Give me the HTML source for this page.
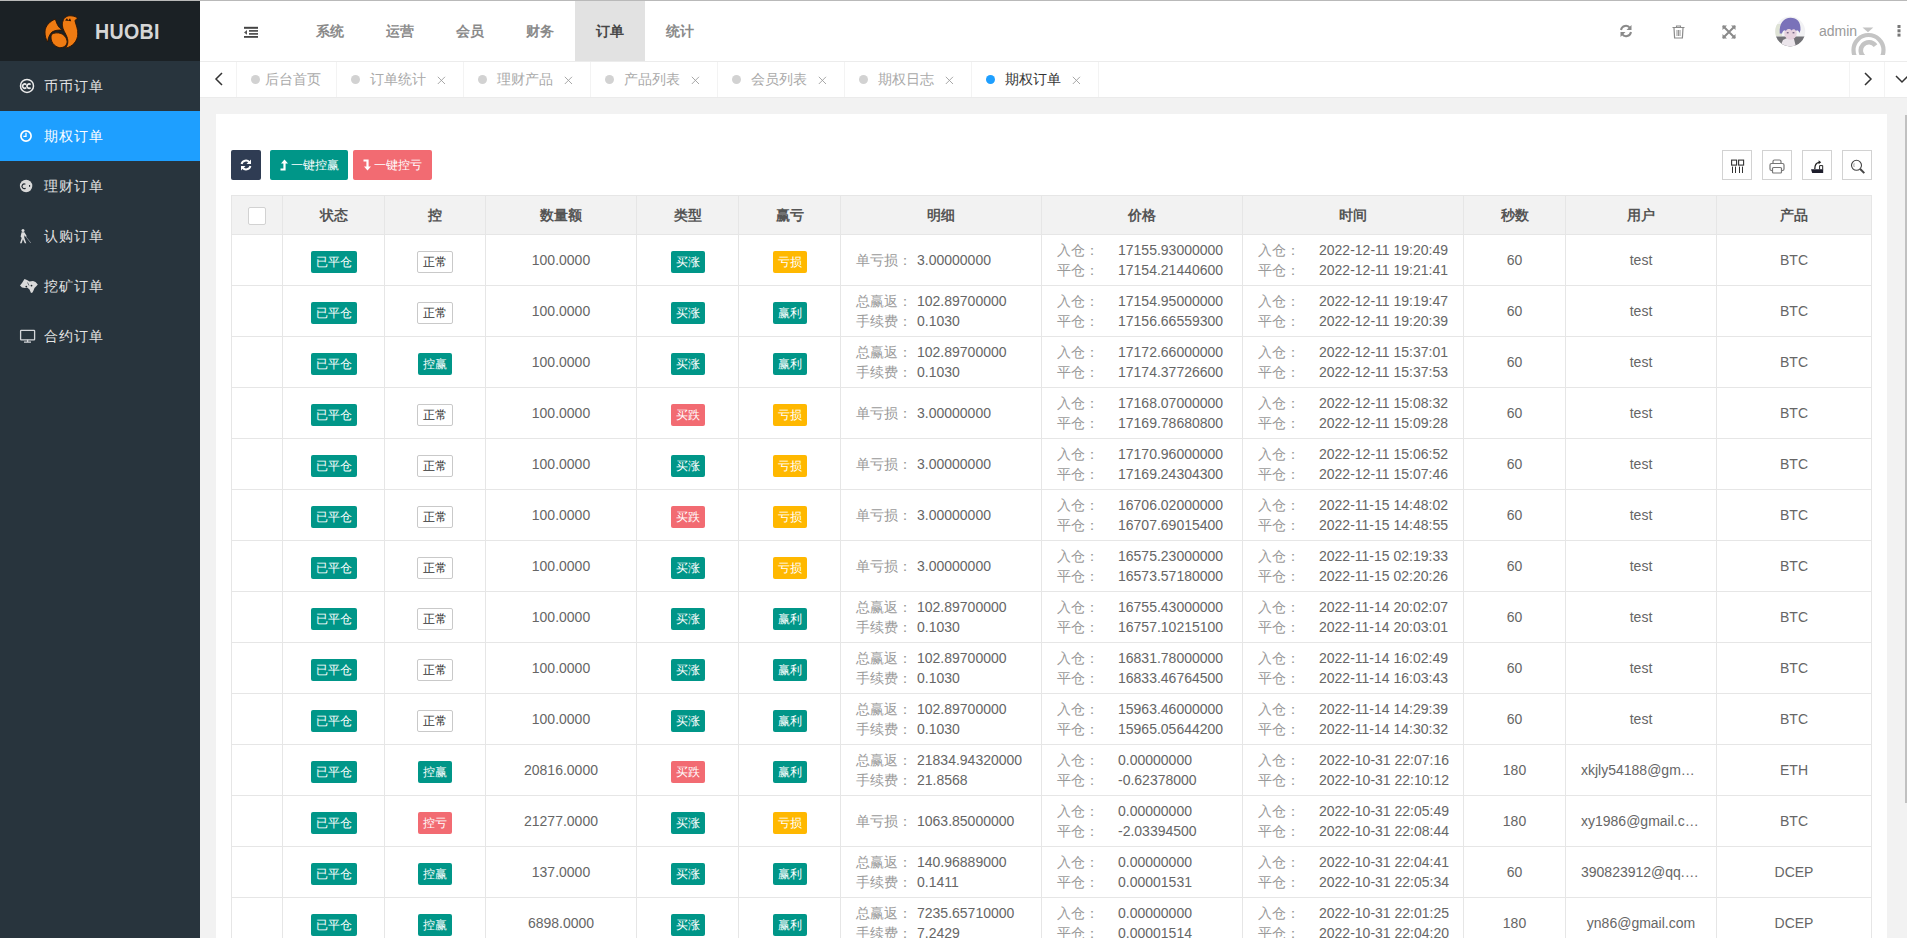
<!DOCTYPE html>
<html><head><meta charset="utf-8"><title>期权订单</title>
<style>
*{box-sizing:border-box;margin:0;padding:0}
html,body{width:1907px;height:938px;overflow:hidden;background:#f2f2f2;font-family:"Liberation Sans",sans-serif;font-size:14px;color:#666}
.abs{position:absolute}
#topline{left:0;top:0;width:1907px;height:1px;background:#b9b9b9}
#side{left:0;top:1px;width:200px;height:937px;background:#28343d}
#logo{left:0;top:1px;width:200px;height:60px;background:#1b2125}
#logo .t{position:absolute;left:95px;top:19px;font-size:22px;font-weight:bold;color:#d6d6d6;letter-spacing:0.3px;line-height:24px;transform:scaleX(0.893);transform-origin:0 0}
.mi{position:absolute;left:0;width:200px;height:50px;color:#e4e4e4}
.mi.on{background:#1e9fff;color:#fff}
.mi .tx{position:absolute;left:44px;top:15px;font-size:14px;line-height:20px;white-space:nowrap;letter-spacing:1px}
.mi svg{position:absolute}
#header{left:200px;top:1px;width:1707px;height:60px;background:#fff}
#hline{left:200px;top:61px;width:1707px;height:1px;background:#ececec}
.nav{position:absolute;top:0;height:60px;width:70px;text-align:center;line-height:60px;font-size:14px;color:#8a8a8a;font-weight:bold}
.nav.on{background:#e2e2e2;color:#474747}
#tabs{left:200px;top:62px;width:1707px;height:35px;background:#fff}
#tline{left:200px;top:97px;width:1707px;height:1px;background:#ebebeb}
.tsep{position:absolute;top:62px;width:1px;height:35px;background:#f3f3f3}
.tab{position:absolute;top:62px;height:35px;line-height:35px;font-size:14px;color:#a9a9a9;white-space:nowrap}
.dot{position:absolute;width:9px;height:9px;border-radius:50%;background:#d2d2d2;top:75px}
.tclose{position:absolute;top:76px}
#card{left:216px;top:114px;width:1671px;height:830px;background:#fff}
#sbar{left:1905px;top:115px;width:2px;height:688px;background:#c1c1c1}
.btn{position:absolute;top:150px;height:30px;border-radius:2px;color:#fff;font-size:12px;line-height:30px;white-space:nowrap}
.tool{position:absolute;top:150px;width:30px;height:30px;border:1px solid #d2d2d2;background:#fff}
.tool svg{position:absolute;left:-1px;top:-1px}
.thead{position:absolute;left:0;top:0;width:1641px;height:40px;background:#f2f2f2;border-top:1px solid #e6e6e6;border-bottom:1px solid #e6e6e6}
.th{position:absolute;top:0;height:38px;line-height:38px;border-left:1px solid #e6e6e6;text-align:center;font-weight:bold;color:#555;white-space:nowrap}
.th:last-child{border-right:1px solid #e6e6e6}
.cb{position:absolute;left:16px;top:11px;width:18px;height:18px;border:1px solid #d2d2d2;border-radius:2px;background:#fff}
.tr{position:absolute;left:0;width:1641px;height:51px;border-bottom:1px solid #e6e6e6}
.td{position:absolute;top:0;height:50px;border-left:1px solid #e6e6e6;white-space:nowrap;overflow:hidden}
.td:last-child{border-right:1px solid #e6e6e6}
.td.c{text-align:center}
.bd{display:inline-block;position:relative;top:16px;height:22px;line-height:22px;font-size:12px;color:#fff;border-radius:2px;text-align:center}
.rim{display:inline-block;position:relative;top:16px;width:36px;height:22px;line-height:20px;font-size:12px;color:#333;border:1px solid #c9c9c9;border-radius:2px;text-align:center}
.num{display:block;line-height:20px;padding-top:15px}
.l1{position:absolute;left:15px;top:15px;line-height:20px}
.l2a{position:absolute;left:15px;top:5px;line-height:20px}
.l2b{position:absolute;left:15px;top:25px;line-height:20px}
.lb{display:inline-block;width:61px;color:#9a9a9a}
.ell{line-height:20px;padding:15px 15px 0;overflow:hidden;text-overflow:ellipsis;white-space:nowrap}

</style></head>
<body>
<div id="topline" class="abs"></div>
<div id="side" class="abs"></div>
<div id="logo" class="abs"><svg class="abs" style="left:40px;top:11px" width="42" height="40" viewBox="0 0 42 40"><g fill="#f07b12" stroke="#2b1405" stroke-width="0.9" stroke-linejoin="round"><path d="M15.4 7.2 C10 9 5 14 5 20 C5 24 6 27.5 7.7 30 C8 26 9.5 22.5 12 20 C15 18 19 18 22.5 18 C19 16 17 13 15.4 7.2 Z"/><path d="M11.5 22.5 C10 27 12 33 18 35.3 C22 36.5 26 34.5 27 31 C27.5 27 25 23.5 21 21.5 C18 20.5 14 20.5 11.5 22.5 Z"/><path d="M23 9 C24 5 28 3.5 31 3.8 C34 4 36.5 5 38 6.4 C36 7 35 8 35 9 C36 13 38 17 37.8 22 C37.5 29 33 34.5 25.5 36.2 C28 33 28.5 29 27 25 C25.5 21 22.5 17.5 22.3 13 C22.2 11.5 22.5 10 23 9 Z"/></g><path d="M25 8.5 L27 6.2 L28.3 8.6 L30 6.3 L31.2 9.2 Z" fill="#2b1405"/></svg><div class="t">HUOBI</div></div>
<div class="mi" style="top:61px"><svg style="left:0;top:0" width="40" height="50" viewBox="0 0 40 50"><circle cx="27" cy="24.9" r="6.5" fill="none" stroke="#ececec" stroke-width="1.5"/><path d="M26.2 23.6 A2.1 2.1 0 1 0 26.2 26.6 M30.6 23.6 A2.1 2.1 0 1 0 30.6 26.6" fill="none" stroke="#ececec" stroke-width="1.6"/></svg><span class="tx">币币订单</span></div>
<div class="mi on" style="top:111px"><svg style="left:0;top:0" width="40" height="50" viewBox="0 0 40 50"><circle cx="26" cy="25" r="5.1" fill="none" stroke="#fff" stroke-width="1.7"/><path d="M26 21.8 V25.4 H23.4" fill="none" stroke="#fff" stroke-width="1.3"/></svg><span class="tx">期权订单</span></div>
<div class="mi" style="top:161px"><svg style="left:0;top:0" width="40" height="50" viewBox="0 0 40 50"><circle cx="26.1" cy="25" r="6.2" fill="#d9d9d9"/><path d="M25.4 23.3 A2.3 2.3 0 1 0 25.6 27.2" fill="none" stroke="#222a32" stroke-width="1.2"/><rect x="29" y="24" width="1.1" height="1.8" fill="#222a32"/></svg><span class="tx">理财订单</span></div>
<div class="mi" style="top:211px"><svg style="left:0;top:0" width="40" height="50" viewBox="0 0 40 50"><circle cx="23" cy="19.4" r="1.5" fill="#dcdcdc"/><path d="M21.6 21.3 L24.4 21.3 L26.8 25.3 L25.8 26 L24.4 24.2 L24.3 26.8 L26.3 32.2 L24.8 32.2 L23 28.3 L21.6 32.2 L20 32.2 L21.7 27 L20.6 25.6 Z" fill="#dcdcdc"/><path d="M26 25.8 L30.8 32" stroke="#7d848c" stroke-width="1"/></svg><span class="tx">认购订单</span></div>
<div class="mi" style="top:261px"><svg style="left:0;top:0" width="40" height="50" viewBox="0 0 40 50"><path d="M20 24.5 L22 22 L24.5 18 L27 19 L29.5 20.5 L33 20 L35.5 21 L37.8 23.5 L36.5 25 L34.5 27 L33.5 29.5 L32.5 31.5 L31 32 L29.5 28.5 L27.5 26.8 L25 27 L22 26.5 Z" fill="#dadada"/><circle cx="26.3" cy="25.6" r="0.9" fill="#1e262d"/><circle cx="31.5" cy="24.6" r="0.9" fill="#1e262d"/><path d="M27.5 21.5 L29 24.5" stroke="#3a444c" stroke-width="0.7"/></svg><span class="tx">挖矿订单</span></div>
<div class="mi" style="top:311px"><svg style="left:0;top:0" width="40" height="50" viewBox="0 0 40 50"><rect x="20.6" y="19.4" width="14" height="9.4" rx="0.6" fill="none" stroke="#d4d6da" stroke-width="1.3"/><path d="M27.6 28.8 V30.6 M24 31.1 H31" stroke="#d4d6da" stroke-width="1.3"/></svg><span class="tx">合约订单</span></div>
<div id="header" class="abs">
<svg class="abs" style="left:44px;top:25px" width="15" height="13" viewBox="0 0 15 13"><rect x="0" y="0.8" width="14" height="2" fill="#444"/><rect x="5" y="4.1" width="9" height="1.6" fill="#444"/><rect x="5" y="7.1" width="9" height="1.6" fill="#444"/><rect x="0" y="10" width="14" height="1.8" fill="#444"/><path d="M0 6.4 L3 4.1 L3 8.7 Z" fill="#555"/></svg>
<div class="nav" style="left:95px">系统</div>
<div class="nav" style="left:165px">运营</div>
<div class="nav" style="left:235px">会员</div>
<div class="nav" style="left:305px">财务</div>
<div class="nav on" style="left:375px">订单</div>
<div class="nav" style="left:445px">统计</div>
<svg class="abs" style="left:1419px;top:23px" width="14" height="14" viewBox="0 0 14 14"><path d="M2 6 A5 5 0 0 1 11 4" fill="none" stroke="#8a8a8a" stroke-width="2"/><path d="M12.5 1 L12.5 6 L7.5 6 Z" fill="#8a8a8a"/><path d="M12 8 A5 5 0 0 1 3 10" fill="none" stroke="#8a8a8a" stroke-width="2"/><path d="M1.5 13 L1.5 8 L6.5 8 Z" fill="#8a8a8a"/></svg>
<svg class="abs" style="left:1472px;top:24px" width="13" height="14" viewBox="0 0 13 14"><path d="M0.5 2.5 H12.5 M4.5 2.5 V1 H8.5 V2.5" fill="none" stroke="#8a8a8a" stroke-width="1.1"/><path d="M2 3 L2.6 13 H10.4 L11 3" fill="none" stroke="#8a8a8a" stroke-width="1.2"/><path d="M5 5 V11 M6.5 5 V11 M8 5 V11" stroke="#8a8a8a" stroke-width="0.9"/></svg>
<svg class="abs" style="left:1522px;top:24px" width="14" height="14" viewBox="0 0 14 14"><path d="M1 1 L13 13 M13 1 L1 13" stroke="#8a8a8a" stroke-width="2"/><path d="M0.5 0.5 H5 L0.5 5 Z M13.5 0.5 H9 L13.5 5 Z M0.5 13.5 H5 L0.5 9 Z M13.5 13.5 H9 L13.5 9 Z" fill="#8a8a8a"/></svg>
<svg class="abs" style="left:1575px;top:15px" width="31" height="31" viewBox="0 0 31 31"><defs><clipPath id="av"><circle cx="15.2" cy="15.5" r="15"/></clipPath></defs><g clip-path="url(#av)"><rect width="31" height="31" fill="#f2f2f4"/><path d="M0 8 H7 V20 H0 Z" fill="#dfe3d6"/><rect x="0" y="20.5" width="31" height="10.5" fill="#727276"/><path d="M5 31 L8 24 L13 21.5 L19 23 L21 31 Z" fill="#ebe5eb"/><ellipse cx="15.5" cy="17" rx="6.3" ry="6.8" fill="#e6d2de"/><path d="M4.7 17.5 C4 7 9 1.8 15.5 1.8 C22 1.8 26 6 25.5 14 L24.5 17 C23.5 14.5 22 13.5 21 15 C20 13 18 12.5 16.5 14.5 C15 12.5 12 12.5 11 15 C10 13.5 8 14 7 17.5 Z" fill="#7a72b9"/><path d="M11.8 16.8 H13.6 M17.6 16.8 H19.4" stroke="#4a3f63" stroke-width="1"/></g></svg>
<div class="abs" style="left:1619px;top:20px;font-size:14px;color:#9a9a9a;line-height:20px">admin</div>
<svg class="abs" style="left:1649px;top:25px" width="40" height="29" viewBox="0 0 40 29"><path d="M13.5 1.4 H24.3 L19 6.2 Z" fill="#c4c4c4"/><circle cx="19.5" cy="24" r="15" fill="none" stroke="#c4c4c4" stroke-width="4.2"/><path d="M26.55 19.57 A8.2 8.2 0 1 0 15.9 31.6" fill="none" stroke="#c4c4c4" stroke-width="4.6"/></svg>
<svg class="abs" style="left:1697px;top:24px" width="4" height="12" viewBox="0 0 4 12"><rect x="0.5" y="0" width="3" height="3" fill="#777"/><rect x="0.5" y="4.3" width="3" height="3" fill="#777"/><rect x="0.5" y="8.6" width="3" height="3" fill="#777"/></svg>
</div>
<div id="hline" class="abs"></div>
<div id="tabs" class="abs"></div>
<div id="tline" class="abs"></div>
<svg class="abs" style="left:214px;top:72px" width="10" height="14" viewBox="0 0 10 14"><path d="M8 1 L2 7 L8 13" fill="none" stroke="#333" stroke-width="1.5"/></svg>
<div class="tsep" style="left:236px"></div>
<div class="tsep" style="left:336px"></div>
<div class="tsep" style="left:463px"></div>
<div class="tsep" style="left:590px"></div>
<div class="tsep" style="left:717px"></div>
<div class="tsep" style="left:844px"></div>
<div class="tsep" style="left:971px"></div>
<div class="tsep" style="left:1098px"></div>
<div class="tsep" style="left:1849px"></div>
<div class="tsep" style="left:1884px"></div>
<div class="dot" style="left:251px;background:#d2d2d2"></div>
<div class="tab" style="left:265px;color:#a9a9a9">后台首页</div>
<div class="dot" style="left:351px;background:#d2d2d2"></div>
<div class="tab" style="left:370px;color:#a9a9a9">订单统计</div>
<svg class="tclose abs" style="left:437px" width="9" height="9" viewBox="0 0 9 9"><path d="M0.8 0.8 L8 8 M8 0.8 L0.8 8" stroke="#9e9e9e" stroke-width="0.9"/></svg>
<div class="dot" style="left:478px;background:#d2d2d2"></div>
<div class="tab" style="left:497px;color:#a9a9a9">理财产品</div>
<svg class="tclose abs" style="left:564px" width="9" height="9" viewBox="0 0 9 9"><path d="M0.8 0.8 L8 8 M8 0.8 L0.8 8" stroke="#9e9e9e" stroke-width="0.9"/></svg>
<div class="dot" style="left:605px;background:#d2d2d2"></div>
<div class="tab" style="left:624px;color:#a9a9a9">产品列表</div>
<svg class="tclose abs" style="left:691px" width="9" height="9" viewBox="0 0 9 9"><path d="M0.8 0.8 L8 8 M8 0.8 L0.8 8" stroke="#9e9e9e" stroke-width="0.9"/></svg>
<div class="dot" style="left:732px;background:#d2d2d2"></div>
<div class="tab" style="left:751px;color:#a9a9a9">会员列表</div>
<svg class="tclose abs" style="left:818px" width="9" height="9" viewBox="0 0 9 9"><path d="M0.8 0.8 L8 8 M8 0.8 L0.8 8" stroke="#9e9e9e" stroke-width="0.9"/></svg>
<div class="dot" style="left:859px;background:#d2d2d2"></div>
<div class="tab" style="left:878px;color:#a9a9a9">期权日志</div>
<svg class="tclose abs" style="left:945px" width="9" height="9" viewBox="0 0 9 9"><path d="M0.8 0.8 L8 8 M8 0.8 L0.8 8" stroke="#9e9e9e" stroke-width="0.9"/></svg>
<div class="dot" style="left:986px;background:#1e9fff"></div>
<div class="tab" style="left:1005px;color:#333">期权订单</div>
<svg class="tclose abs" style="left:1072px" width="9" height="9" viewBox="0 0 9 9"><path d="M0.8 0.8 L8 8 M8 0.8 L0.8 8" stroke="#9e9e9e" stroke-width="0.9"/></svg>
<svg class="abs" style="left:1863px;top:72px" width="10" height="14" viewBox="0 0 10 14"><path d="M2 1 L8 7 L2 13" fill="none" stroke="#333" stroke-width="1.5"/></svg>
<svg class="abs" style="left:1895px;top:74px" width="14" height="10" viewBox="0 0 14 10"><path d="M1 2 L7 8 L13 2" fill="none" stroke="#333" stroke-width="1.5"/></svg>
<div id="card" class="abs"></div>
<div id="sbar" class="abs"></div>
<div class="btn" style="left:231px;width:30px;background:#2f3c53"><svg class="abs" style="left:9px;top:9px" width="12" height="12" viewBox="0 0 12 12"><path d="M1.6 5 A4.4 4.4 0 0 1 9.4 3.4" fill="none" stroke="#fff" stroke-width="2"/><path d="M11 0.5 L11 5 L6.5 5 Z" fill="#fff"/><path d="M10.4 7 A4.4 4.4 0 0 1 2.6 8.6" fill="none" stroke="#fff" stroke-width="2"/><path d="M1 11.5 L1 7 L5.5 7 Z" fill="#fff"/></svg></div>
<div class="btn" style="left:270px;width:78px;background:#009688"><svg class="abs" style="left:10px;top:9px" width="8" height="12" viewBox="0 0 8 12"><path d="M4.5 0.5 L8 4.5 L5.6 4.5 L5.6 11.5 L0.5 11.5 L0.5 9.5 L3.4 9.5 L3.4 4.5 L1 4.5 Z" fill="#fff"/></svg><span class="abs" style="left:21px;top:0">一键控赢</span></div>
<div class="btn" style="left:353px;width:79px;background:#f26b72"><svg class="abs" style="left:10px;top:9px" width="8" height="12" viewBox="0 0 8 12"><path d="M4.5 11.5 L8 7.5 L5.6 7.5 L5.6 0.5 L0.5 0.5 L0.5 2.5 L3.4 2.5 L3.4 7.5 L1 7.5 Z" fill="#fff"/></svg><span class="abs" style="left:21px;top:0">一键控亏</span></div>
<div class="tool" style="left:1722px"><svg width="30" height="30" viewBox="0 0 30 30"><rect x="9.6" y="10.1" width="5" height="5" fill="none" stroke="#333" stroke-width="1.1"/><rect x="16.6" y="10.1" width="5" height="5" fill="none" stroke="#333" stroke-width="1.1"/><path d="M10.5 16.6 V23 M13.5 16.6 V23 M17.5 16.6 V23 M20.5 16.6 V23" stroke="#333" stroke-width="1"/></svg></div>
<div class="tool" style="left:1762px"><svg width="30" height="30" viewBox="0 -1 30 30"><path d="M11 12.5 V10.5 Q11 9 12.5 9 H17.5 Q19 9 19 10.5 V12.5" fill="none" stroke="#777" stroke-width="1.2"/><path d="M10.5 19.5 H9.5 Q8 19.5 8 18 V14 Q8 12.5 9.5 12.5 H20.5 Q22 12.5 22 14 V18 Q22 19.5 20.5 19.5 H19.5" fill="none" stroke="#777" stroke-width="1.2"/><rect x="10.5" y="16.5" width="9" height="5.5" rx="1" fill="none" stroke="#777" stroke-width="1.2"/></svg></div>
<div class="tool" style="left:1802px"><svg width="30" height="30" viewBox="1 0 30 30"><path d="M10 19.3 L22.2 19.3 L22.2 23 L11.2 23 Z" fill="#1d1d2c"/><path d="M18.6 19.5 V15.6 H21.7 V19.5" fill="none" stroke="#222" stroke-width="1"/><path d="M13.8 19 Q13.8 12.8 18.2 12.3" fill="none" stroke="#222" stroke-width="1.3"/><path d="M17.6 10.3 L20.2 12.3 L17.6 14.2 Z" fill="#222"/></svg></div>
<div class="tool" style="left:1842px"><svg width="30" height="30" viewBox="0 0 30 30"><circle cx="14.5" cy="15.3" r="5" fill="none" stroke="#444" stroke-width="1.1"/><path d="M18.2 19 L22.3 23.1" stroke="#444" stroke-width="2"/><path d="M12.2 13.3 Q11.4 15.2 12.2 17" fill="none" stroke="#888" stroke-width="0.8"/></svg></div>
<div class="abs" style="left:231px;top:195px;width:1641px;height:743px;overflow:hidden">
<div class="thead">
<div class="th" style="left:0px;width:51px"><div class="cb"></div></div>
<div class="th" style="left:51px;width:102px">状态</div>
<div class="th" style="left:153px;width:101px">控</div>
<div class="th" style="left:254px;width:151px">数量额</div>
<div class="th" style="left:405px;width:102px">类型</div>
<div class="th" style="left:507px;width:102px">赢亏</div>
<div class="th" style="left:609px;width:201px">明细</div>
<div class="th" style="left:810px;width:201px">价格</div>
<div class="th" style="left:1011px;width:221px">时间</div>
<div class="th" style="left:1232px;width:102px">秒数</div>
<div class="th" style="left:1334px;width:151px">用户</div>
<div class="th" style="left:1485px;width:156px">产品</div>
</div>
<div class="tr" style="top:40px">
<div class="td" style="left:0px;width:51px"></div>
<div class="td c" style="left:51px;width:102px"><span class="bd" style="background:#009688;width:46px">已平仓</span></div>
<div class="td c" style="left:153px;width:101px"><span class="rim">正常</span></div>
<div class="td c" style="left:254px;width:151px"><span class="num">100.0000</span></div>
<div class="td c" style="left:405px;width:102px"><span class="bd" style="background:#009688;width:34px">买涨</span></div>
<div class="td c" style="left:507px;width:102px"><span class="bd" style="background:#ffb800;width:34px">亏损</span></div>
<div class="td" style="left:609px;width:201px"><div class="l1"><span class="lb">单亏损：</span>3.00000000</div></div>
<div class="td" style="left:810px;width:201px"><div class="l2a"><span class="lb">入仓：</span>17155.93000000</div><div class="l2b"><span class="lb">平仓：</span>17154.21440600</div></div>
<div class="td" style="left:1011px;width:221px"><div class="l2a"><span class="lb">入仓：</span>2022-12-11 19:20:49</div><div class="l2b"><span class="lb">平仓：</span>2022-12-11 19:21:41</div></div>
<div class="td c" style="left:1232px;width:102px"><span class="num">60</span></div>
<div class="td c" style="left:1334px;width:151px"><div class="ell">test</div></div>
<div class="td c" style="left:1485px;width:156px"><span class="num">BTC</span></div>
</div>
<div class="tr" style="top:91px">
<div class="td" style="left:0px;width:51px"></div>
<div class="td c" style="left:51px;width:102px"><span class="bd" style="background:#009688;width:46px">已平仓</span></div>
<div class="td c" style="left:153px;width:101px"><span class="rim">正常</span></div>
<div class="td c" style="left:254px;width:151px"><span class="num">100.0000</span></div>
<div class="td c" style="left:405px;width:102px"><span class="bd" style="background:#009688;width:34px">买涨</span></div>
<div class="td c" style="left:507px;width:102px"><span class="bd" style="background:#009688;width:34px">赢利</span></div>
<div class="td" style="left:609px;width:201px"><div class="l2a"><span class="lb">总赢返：</span>102.89700000</div><div class="l2b"><span class="lb">手续费：</span>0.1030</div></div>
<div class="td" style="left:810px;width:201px"><div class="l2a"><span class="lb">入仓：</span>17154.95000000</div><div class="l2b"><span class="lb">平仓：</span>17156.66559300</div></div>
<div class="td" style="left:1011px;width:221px"><div class="l2a"><span class="lb">入仓：</span>2022-12-11 19:19:47</div><div class="l2b"><span class="lb">平仓：</span>2022-12-11 19:20:39</div></div>
<div class="td c" style="left:1232px;width:102px"><span class="num">60</span></div>
<div class="td c" style="left:1334px;width:151px"><div class="ell">test</div></div>
<div class="td c" style="left:1485px;width:156px"><span class="num">BTC</span></div>
</div>
<div class="tr" style="top:142px">
<div class="td" style="left:0px;width:51px"></div>
<div class="td c" style="left:51px;width:102px"><span class="bd" style="background:#009688;width:46px">已平仓</span></div>
<div class="td c" style="left:153px;width:101px"><span class="bd" style="background:#009688;width:34px">控赢</span></div>
<div class="td c" style="left:254px;width:151px"><span class="num">100.0000</span></div>
<div class="td c" style="left:405px;width:102px"><span class="bd" style="background:#009688;width:34px">买涨</span></div>
<div class="td c" style="left:507px;width:102px"><span class="bd" style="background:#009688;width:34px">赢利</span></div>
<div class="td" style="left:609px;width:201px"><div class="l2a"><span class="lb">总赢返：</span>102.89700000</div><div class="l2b"><span class="lb">手续费：</span>0.1030</div></div>
<div class="td" style="left:810px;width:201px"><div class="l2a"><span class="lb">入仓：</span>17172.66000000</div><div class="l2b"><span class="lb">平仓：</span>17174.37726600</div></div>
<div class="td" style="left:1011px;width:221px"><div class="l2a"><span class="lb">入仓：</span>2022-12-11 15:37:01</div><div class="l2b"><span class="lb">平仓：</span>2022-12-11 15:37:53</div></div>
<div class="td c" style="left:1232px;width:102px"><span class="num">60</span></div>
<div class="td c" style="left:1334px;width:151px"><div class="ell">test</div></div>
<div class="td c" style="left:1485px;width:156px"><span class="num">BTC</span></div>
</div>
<div class="tr" style="top:193px">
<div class="td" style="left:0px;width:51px"></div>
<div class="td c" style="left:51px;width:102px"><span class="bd" style="background:#009688;width:46px">已平仓</span></div>
<div class="td c" style="left:153px;width:101px"><span class="rim">正常</span></div>
<div class="td c" style="left:254px;width:151px"><span class="num">100.0000</span></div>
<div class="td c" style="left:405px;width:102px"><span class="bd" style="background:#f26b72;width:34px">买跌</span></div>
<div class="td c" style="left:507px;width:102px"><span class="bd" style="background:#ffb800;width:34px">亏损</span></div>
<div class="td" style="left:609px;width:201px"><div class="l1"><span class="lb">单亏损：</span>3.00000000</div></div>
<div class="td" style="left:810px;width:201px"><div class="l2a"><span class="lb">入仓：</span>17168.07000000</div><div class="l2b"><span class="lb">平仓：</span>17169.78680800</div></div>
<div class="td" style="left:1011px;width:221px"><div class="l2a"><span class="lb">入仓：</span>2022-12-11 15:08:32</div><div class="l2b"><span class="lb">平仓：</span>2022-12-11 15:09:28</div></div>
<div class="td c" style="left:1232px;width:102px"><span class="num">60</span></div>
<div class="td c" style="left:1334px;width:151px"><div class="ell">test</div></div>
<div class="td c" style="left:1485px;width:156px"><span class="num">BTC</span></div>
</div>
<div class="tr" style="top:244px">
<div class="td" style="left:0px;width:51px"></div>
<div class="td c" style="left:51px;width:102px"><span class="bd" style="background:#009688;width:46px">已平仓</span></div>
<div class="td c" style="left:153px;width:101px"><span class="rim">正常</span></div>
<div class="td c" style="left:254px;width:151px"><span class="num">100.0000</span></div>
<div class="td c" style="left:405px;width:102px"><span class="bd" style="background:#009688;width:34px">买涨</span></div>
<div class="td c" style="left:507px;width:102px"><span class="bd" style="background:#ffb800;width:34px">亏损</span></div>
<div class="td" style="left:609px;width:201px"><div class="l1"><span class="lb">单亏损：</span>3.00000000</div></div>
<div class="td" style="left:810px;width:201px"><div class="l2a"><span class="lb">入仓：</span>17170.96000000</div><div class="l2b"><span class="lb">平仓：</span>17169.24304300</div></div>
<div class="td" style="left:1011px;width:221px"><div class="l2a"><span class="lb">入仓：</span>2022-12-11 15:06:52</div><div class="l2b"><span class="lb">平仓：</span>2022-12-11 15:07:46</div></div>
<div class="td c" style="left:1232px;width:102px"><span class="num">60</span></div>
<div class="td c" style="left:1334px;width:151px"><div class="ell">test</div></div>
<div class="td c" style="left:1485px;width:156px"><span class="num">BTC</span></div>
</div>
<div class="tr" style="top:295px">
<div class="td" style="left:0px;width:51px"></div>
<div class="td c" style="left:51px;width:102px"><span class="bd" style="background:#009688;width:46px">已平仓</span></div>
<div class="td c" style="left:153px;width:101px"><span class="rim">正常</span></div>
<div class="td c" style="left:254px;width:151px"><span class="num">100.0000</span></div>
<div class="td c" style="left:405px;width:102px"><span class="bd" style="background:#f26b72;width:34px">买跌</span></div>
<div class="td c" style="left:507px;width:102px"><span class="bd" style="background:#ffb800;width:34px">亏损</span></div>
<div class="td" style="left:609px;width:201px"><div class="l1"><span class="lb">单亏损：</span>3.00000000</div></div>
<div class="td" style="left:810px;width:201px"><div class="l2a"><span class="lb">入仓：</span>16706.02000000</div><div class="l2b"><span class="lb">平仓：</span>16707.69015400</div></div>
<div class="td" style="left:1011px;width:221px"><div class="l2a"><span class="lb">入仓：</span>2022-11-15 14:48:02</div><div class="l2b"><span class="lb">平仓：</span>2022-11-15 14:48:55</div></div>
<div class="td c" style="left:1232px;width:102px"><span class="num">60</span></div>
<div class="td c" style="left:1334px;width:151px"><div class="ell">test</div></div>
<div class="td c" style="left:1485px;width:156px"><span class="num">BTC</span></div>
</div>
<div class="tr" style="top:346px">
<div class="td" style="left:0px;width:51px"></div>
<div class="td c" style="left:51px;width:102px"><span class="bd" style="background:#009688;width:46px">已平仓</span></div>
<div class="td c" style="left:153px;width:101px"><span class="rim">正常</span></div>
<div class="td c" style="left:254px;width:151px"><span class="num">100.0000</span></div>
<div class="td c" style="left:405px;width:102px"><span class="bd" style="background:#009688;width:34px">买涨</span></div>
<div class="td c" style="left:507px;width:102px"><span class="bd" style="background:#ffb800;width:34px">亏损</span></div>
<div class="td" style="left:609px;width:201px"><div class="l1"><span class="lb">单亏损：</span>3.00000000</div></div>
<div class="td" style="left:810px;width:201px"><div class="l2a"><span class="lb">入仓：</span>16575.23000000</div><div class="l2b"><span class="lb">平仓：</span>16573.57180000</div></div>
<div class="td" style="left:1011px;width:221px"><div class="l2a"><span class="lb">入仓：</span>2022-11-15 02:19:33</div><div class="l2b"><span class="lb">平仓：</span>2022-11-15 02:20:26</div></div>
<div class="td c" style="left:1232px;width:102px"><span class="num">60</span></div>
<div class="td c" style="left:1334px;width:151px"><div class="ell">test</div></div>
<div class="td c" style="left:1485px;width:156px"><span class="num">BTC</span></div>
</div>
<div class="tr" style="top:397px">
<div class="td" style="left:0px;width:51px"></div>
<div class="td c" style="left:51px;width:102px"><span class="bd" style="background:#009688;width:46px">已平仓</span></div>
<div class="td c" style="left:153px;width:101px"><span class="rim">正常</span></div>
<div class="td c" style="left:254px;width:151px"><span class="num">100.0000</span></div>
<div class="td c" style="left:405px;width:102px"><span class="bd" style="background:#009688;width:34px">买涨</span></div>
<div class="td c" style="left:507px;width:102px"><span class="bd" style="background:#009688;width:34px">赢利</span></div>
<div class="td" style="left:609px;width:201px"><div class="l2a"><span class="lb">总赢返：</span>102.89700000</div><div class="l2b"><span class="lb">手续费：</span>0.1030</div></div>
<div class="td" style="left:810px;width:201px"><div class="l2a"><span class="lb">入仓：</span>16755.43000000</div><div class="l2b"><span class="lb">平仓：</span>16757.10215100</div></div>
<div class="td" style="left:1011px;width:221px"><div class="l2a"><span class="lb">入仓：</span>2022-11-14 20:02:07</div><div class="l2b"><span class="lb">平仓：</span>2022-11-14 20:03:01</div></div>
<div class="td c" style="left:1232px;width:102px"><span class="num">60</span></div>
<div class="td c" style="left:1334px;width:151px"><div class="ell">test</div></div>
<div class="td c" style="left:1485px;width:156px"><span class="num">BTC</span></div>
</div>
<div class="tr" style="top:448px">
<div class="td" style="left:0px;width:51px"></div>
<div class="td c" style="left:51px;width:102px"><span class="bd" style="background:#009688;width:46px">已平仓</span></div>
<div class="td c" style="left:153px;width:101px"><span class="rim">正常</span></div>
<div class="td c" style="left:254px;width:151px"><span class="num">100.0000</span></div>
<div class="td c" style="left:405px;width:102px"><span class="bd" style="background:#009688;width:34px">买涨</span></div>
<div class="td c" style="left:507px;width:102px"><span class="bd" style="background:#009688;width:34px">赢利</span></div>
<div class="td" style="left:609px;width:201px"><div class="l2a"><span class="lb">总赢返：</span>102.89700000</div><div class="l2b"><span class="lb">手续费：</span>0.1030</div></div>
<div class="td" style="left:810px;width:201px"><div class="l2a"><span class="lb">入仓：</span>16831.78000000</div><div class="l2b"><span class="lb">平仓：</span>16833.46764500</div></div>
<div class="td" style="left:1011px;width:221px"><div class="l2a"><span class="lb">入仓：</span>2022-11-14 16:02:49</div><div class="l2b"><span class="lb">平仓：</span>2022-11-14 16:03:43</div></div>
<div class="td c" style="left:1232px;width:102px"><span class="num">60</span></div>
<div class="td c" style="left:1334px;width:151px"><div class="ell">test</div></div>
<div class="td c" style="left:1485px;width:156px"><span class="num">BTC</span></div>
</div>
<div class="tr" style="top:499px">
<div class="td" style="left:0px;width:51px"></div>
<div class="td c" style="left:51px;width:102px"><span class="bd" style="background:#009688;width:46px">已平仓</span></div>
<div class="td c" style="left:153px;width:101px"><span class="rim">正常</span></div>
<div class="td c" style="left:254px;width:151px"><span class="num">100.0000</span></div>
<div class="td c" style="left:405px;width:102px"><span class="bd" style="background:#009688;width:34px">买涨</span></div>
<div class="td c" style="left:507px;width:102px"><span class="bd" style="background:#009688;width:34px">赢利</span></div>
<div class="td" style="left:609px;width:201px"><div class="l2a"><span class="lb">总赢返：</span>102.89700000</div><div class="l2b"><span class="lb">手续费：</span>0.1030</div></div>
<div class="td" style="left:810px;width:201px"><div class="l2a"><span class="lb">入仓：</span>15963.46000000</div><div class="l2b"><span class="lb">平仓：</span>15965.05644200</div></div>
<div class="td" style="left:1011px;width:221px"><div class="l2a"><span class="lb">入仓：</span>2022-11-14 14:29:39</div><div class="l2b"><span class="lb">平仓：</span>2022-11-14 14:30:32</div></div>
<div class="td c" style="left:1232px;width:102px"><span class="num">60</span></div>
<div class="td c" style="left:1334px;width:151px"><div class="ell">test</div></div>
<div class="td c" style="left:1485px;width:156px"><span class="num">BTC</span></div>
</div>
<div class="tr" style="top:550px">
<div class="td" style="left:0px;width:51px"></div>
<div class="td c" style="left:51px;width:102px"><span class="bd" style="background:#009688;width:46px">已平仓</span></div>
<div class="td c" style="left:153px;width:101px"><span class="bd" style="background:#009688;width:34px">控赢</span></div>
<div class="td c" style="left:254px;width:151px"><span class="num">20816.0000</span></div>
<div class="td c" style="left:405px;width:102px"><span class="bd" style="background:#f26b72;width:34px">买跌</span></div>
<div class="td c" style="left:507px;width:102px"><span class="bd" style="background:#009688;width:34px">赢利</span></div>
<div class="td" style="left:609px;width:201px"><div class="l2a"><span class="lb">总赢返：</span>21834.94320000</div><div class="l2b"><span class="lb">手续费：</span>21.8568</div></div>
<div class="td" style="left:810px;width:201px"><div class="l2a"><span class="lb">入仓：</span>0.00000000</div><div class="l2b"><span class="lb">平仓：</span>-0.62378000</div></div>
<div class="td" style="left:1011px;width:221px"><div class="l2a"><span class="lb">入仓：</span>2022-10-31 22:07:16</div><div class="l2b"><span class="lb">平仓：</span>2022-10-31 22:10:12</div></div>
<div class="td c" style="left:1232px;width:102px"><span class="num">180</span></div>
<div class="td c" style="left:1334px;width:151px"><div class="ell">xkjly54188@gmail.com</div></div>
<div class="td c" style="left:1485px;width:156px"><span class="num">ETH</span></div>
</div>
<div class="tr" style="top:601px">
<div class="td" style="left:0px;width:51px"></div>
<div class="td c" style="left:51px;width:102px"><span class="bd" style="background:#009688;width:46px">已平仓</span></div>
<div class="td c" style="left:153px;width:101px"><span class="bd" style="background:#f26b72;width:34px">控亏</span></div>
<div class="td c" style="left:254px;width:151px"><span class="num">21277.0000</span></div>
<div class="td c" style="left:405px;width:102px"><span class="bd" style="background:#009688;width:34px">买涨</span></div>
<div class="td c" style="left:507px;width:102px"><span class="bd" style="background:#ffb800;width:34px">亏损</span></div>
<div class="td" style="left:609px;width:201px"><div class="l1"><span class="lb">单亏损：</span>1063.85000000</div></div>
<div class="td" style="left:810px;width:201px"><div class="l2a"><span class="lb">入仓：</span>0.00000000</div><div class="l2b"><span class="lb">平仓：</span>-2.03394500</div></div>
<div class="td" style="left:1011px;width:221px"><div class="l2a"><span class="lb">入仓：</span>2022-10-31 22:05:49</div><div class="l2b"><span class="lb">平仓：</span>2022-10-31 22:08:44</div></div>
<div class="td c" style="left:1232px;width:102px"><span class="num">180</span></div>
<div class="td c" style="left:1334px;width:151px"><div class="ell">xy1986@gmail.com</div></div>
<div class="td c" style="left:1485px;width:156px"><span class="num">BTC</span></div>
</div>
<div class="tr" style="top:652px">
<div class="td" style="left:0px;width:51px"></div>
<div class="td c" style="left:51px;width:102px"><span class="bd" style="background:#009688;width:46px">已平仓</span></div>
<div class="td c" style="left:153px;width:101px"><span class="bd" style="background:#009688;width:34px">控赢</span></div>
<div class="td c" style="left:254px;width:151px"><span class="num">137.0000</span></div>
<div class="td c" style="left:405px;width:102px"><span class="bd" style="background:#009688;width:34px">买涨</span></div>
<div class="td c" style="left:507px;width:102px"><span class="bd" style="background:#009688;width:34px">赢利</span></div>
<div class="td" style="left:609px;width:201px"><div class="l2a"><span class="lb">总赢返：</span>140.96889000</div><div class="l2b"><span class="lb">手续费：</span>0.1411</div></div>
<div class="td" style="left:810px;width:201px"><div class="l2a"><span class="lb">入仓：</span>0.00000000</div><div class="l2b"><span class="lb">平仓：</span>0.00001531</div></div>
<div class="td" style="left:1011px;width:221px"><div class="l2a"><span class="lb">入仓：</span>2022-10-31 22:04:41</div><div class="l2b"><span class="lb">平仓：</span>2022-10-31 22:05:34</div></div>
<div class="td c" style="left:1232px;width:102px"><span class="num">60</span></div>
<div class="td c" style="left:1334px;width:151px"><div class="ell">390823912@qq.com</div></div>
<div class="td c" style="left:1485px;width:156px"><span class="num">DCEP</span></div>
</div>
<div class="tr" style="top:703px">
<div class="td" style="left:0px;width:51px"></div>
<div class="td c" style="left:51px;width:102px"><span class="bd" style="background:#009688;width:46px">已平仓</span></div>
<div class="td c" style="left:153px;width:101px"><span class="bd" style="background:#009688;width:34px">控赢</span></div>
<div class="td c" style="left:254px;width:151px"><span class="num">6898.0000</span></div>
<div class="td c" style="left:405px;width:102px"><span class="bd" style="background:#009688;width:34px">买涨</span></div>
<div class="td c" style="left:507px;width:102px"><span class="bd" style="background:#009688;width:34px">赢利</span></div>
<div class="td" style="left:609px;width:201px"><div class="l2a"><span class="lb">总赢返：</span>7235.65710000</div><div class="l2b"><span class="lb">手续费：</span>7.2429</div></div>
<div class="td" style="left:810px;width:201px"><div class="l2a"><span class="lb">入仓：</span>0.00000000</div><div class="l2b"><span class="lb">平仓：</span>0.00001514</div></div>
<div class="td" style="left:1011px;width:221px"><div class="l2a"><span class="lb">入仓：</span>2022-10-31 22:01:25</div><div class="l2b"><span class="lb">平仓：</span>2022-10-31 22:04:20</div></div>
<div class="td c" style="left:1232px;width:102px"><span class="num">180</span></div>
<div class="td c" style="left:1334px;width:151px"><div class="ell">yn86@gmail.com</div></div>
<div class="td c" style="left:1485px;width:156px"><span class="num">DCEP</span></div>
</div>
</div>
</body></html>
